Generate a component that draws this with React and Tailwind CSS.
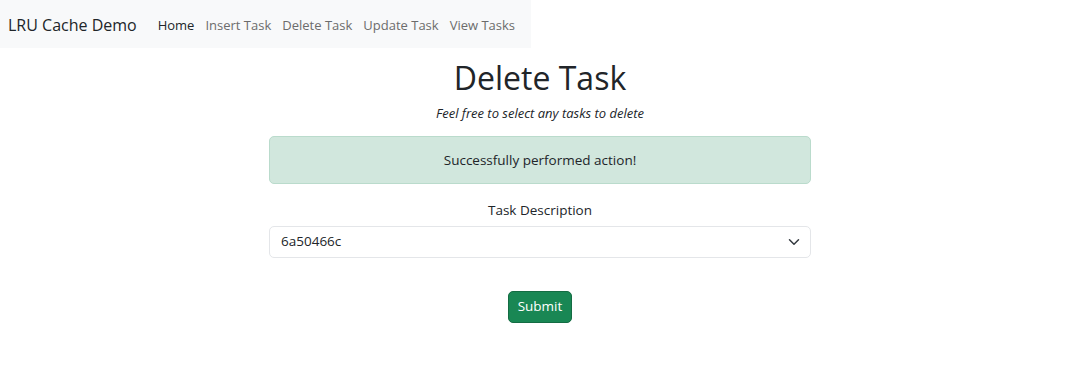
import React from "react";

export default function App() {
  return (
    <div className="w-[1080px] h-[382px] bg-white text-[#212529]" style={{ fontFamily: '"Open Sans", "Noto Sans", sans-serif' }}>
      <nav className="w-[531px] h-[48px] bg-[#f8f9fa] flex items-center pl-[8px] whitespace-nowrap">
        <span className="text-[16px] text-[#212529] mr-[21px] leading-none shrink-0 translate-y-[1px]">LRU Cache Demo</span>
        <div className="flex gap-[11px] text-[13px] leading-none shrink-0 translate-y-[1px]">
          <span className="text-[#212529]">Home</span>
          <span className="text-[#6c6c6c]">Insert Task</span>
          <span className="text-[#6c6c6c]">Delete Task</span>
          <span className="text-[#6c6c6c]">Update Task</span>
          <span className="text-[#6c6c6c]">View Tasks</span>
        </div>
      </nav>
      <div className="w-[542px] mx-auto flex flex-col items-center">
        <h1 className="text-[32px] font-medium leading-none mt-[12px] h-[36px] flex items-center">Delete Task</h1>
        <p className="italic text-[13px] mt-[11px] leading-none">Feel free to select any tasks to delete</p>
        <div className="w-full h-[48px] mt-[16px] bg-[#d1e7dd] border border-[#badbcc] rounded-[5px] flex items-center justify-center text-[13.5px] text-[#212529]">
          Successfully performed action!
        </div>
        <label className="text-[13.5px] mt-[20px] leading-none">Task Description</label>
        <div className="w-full h-[32px] mt-[8px] border border-[#e4e6e9] rounded-[5px] flex items-center justify-between pl-[11px] pr-[10px] text-[13.5px]">
          <span>6a50466c</span>
          <svg width="12" height="12" viewBox="0 0 16 16" fill="none" stroke="#343a40" strokeWidth="2" strokeLinecap="round" strokeLinejoin="round">
            <path d="m2 5 6 6 6-6" />
          </svg>
        </div>
        <button className="mt-[33px] w-[64px] h-[32px] bg-[#198754] border border-[#146c43] rounded-[5px] text-white text-[13.5px] flex items-center justify-center">
          Submit
        </button>
      </div>
    </div>
  );
}
